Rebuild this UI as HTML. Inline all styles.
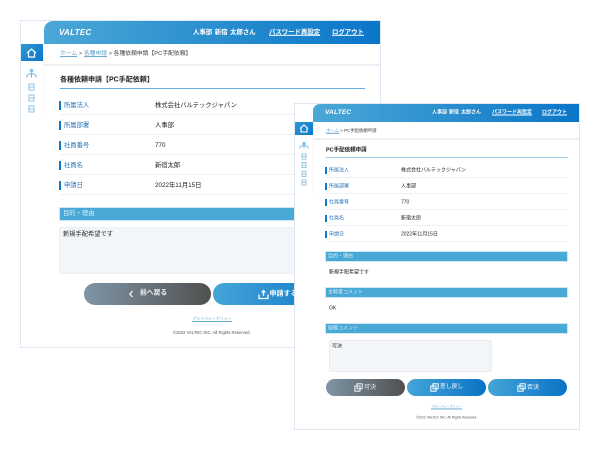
<!DOCTYPE html>
<html lang="ja"><head><meta charset="utf-8">
<style>
html,body{margin:0;padding:0;background:#fff}
body{width:600px;height:450px;position:relative;overflow:hidden;font-family:"Liberation Sans","Noto Sans CJK JP",sans-serif;color:#222}
.a{position:absolute;white-space:nowrap}
svg.a{filter:blur(.3px)}
.t{position:absolute;white-space:nowrap;line-height:1;transform:translateY(-50%);filter:blur(.35px)}
.win{position:absolute;background:#fff;border:1px solid #dfe9f5;box-sizing:border-box}
.hd{position:absolute;background:linear-gradient(90deg,#4ba8d6,#0a76c9)}
.home{position:absolute;background:linear-gradient(135deg,#2f97d2,#0a76c9)}
.bar{position:absolute;background:#48a8d6;border:1px solid #cfe6f3;box-sizing:border-box}
.ln{position:absolute;height:1px;background:#edf0f4}
.mk{position:absolute;background:#0e78c8}
.blue{color:#2a73b8}
.btn{position:absolute;border-radius:12px}
.g{background:linear-gradient(90deg,#7f95a6,#505050)}
.b{background:linear-gradient(90deg,#45a5d8,#0a72c6)}
.w{color:#fff}
.bt{color:#dcedf7}
.lg{font-style:italic;font-weight:bold;color:#fff;font-family:"Liberation Sans",sans-serif}
</style></head><body>

<!-- Left window -->
<div class="win" style="left:20px;top:20px;width:361px;height:328px"></div>
<div class="hd" style="left:44px;top:21px;width:336px;height:23px;border-top-left-radius:9px"></div>
<div class="t lg" style="left:59px;top:32.5px;font-size:8px;letter-spacing:.3px">VALTEC</div>
<div class="t w" style="left:193px;top:32.5px;font-size:6.4px;font-weight:bold;word-spacing:.8px">人事部 新宿 太郎さん</div>
<div class="t w" style="left:269px;top:32.5px;font-size:6.4px;font-weight:bold;text-decoration:underline">パスワード再設定</div>
<div class="t w" style="left:332px;top:32.5px;font-size:6.4px;font-weight:bold;text-decoration:underline">ログアウト</div>
<div class="home" style="left:21px;top:44px;width:23px;height:17px"></div>
<svg class="a" style="left:25px;top:47px" width="13" height="12" viewBox="0 0 13 12" fill="none" stroke="#fff" stroke-width="1.2"><path d="M2 6 6.500 2 11 6M3.500 5.500V10H9.500V5.500"/></svg>
<div class="a" style="left:43px;top:44px;width:1px;height:70px;background:#f3f5f7"></div>
<div class="a" style="left:44px;top:64px;width:336px;height:2px;background:#eeeff1"></div>
<svg class="a" style="left:25px;top:68px" width="13" height="46" viewBox="0 0 13 46" fill="none" stroke="#8cc3e6" stroke-width="1"><circle cx="6.500" cy="2.500" r="1.300" fill="#6fb3df"/><path d="M2 9.500V7.500L6.500 5 11 7.500V9.500M6.500 5V9.500" stroke="#6fb3df"/><rect x="4" y="16" width="5" height="6"/><path d="M4 19H9"/><rect x="4" y="27" width="5" height="6"/><path d="M4 30H9"/><rect x="4" y="38" width="5" height="6"/><path d="M4 41H9"/></svg>
<div class="t" style="left:60px;top:54.500px;font-size:5.800px;color:#66a3c9"><u>ホーム</u> <span style="color:#555">&gt;</span> <u>各種申請</u> <span style="color:#444">&gt; 各種依頼申請【PC手配依頼】</span></div>
<div class="t" style="left:60px;top:80px;font-size:7px;font-weight:bold">各種依頼申請【PC手配依頼】</div>
<div class="a" style="left:60px;top:87.500px;width:305px;height:1px;background:#5db0df"></div>

<div class="mk" style="left:59px;top:101px;width:2px;height:9px"></div><div class="t blue" style="left:64px;top:105.500px;font-size:6.300px">所属法人</div><div class="t" style="left:155px;top:105.500px;font-size:6.300px">株式会社バルテックジャパン</div><div class="ln" style="left:60px;top:114px;width:235px"></div>
<div class="mk" style="left:59px;top:121px;width:2px;height:9px"></div><div class="t blue" style="left:64px;top:125.500px;font-size:6.300px">所属部署</div><div class="t" style="left:155px;top:125.500px;font-size:6.300px">人事部</div><div class="ln" style="left:60px;top:134px;width:235px"></div>
<div class="mk" style="left:59px;top:141px;width:2px;height:9px"></div><div class="t blue" style="left:64px;top:145.500px;font-size:6.300px">社員番号</div><div class="t" style="left:155px;top:145.500px;font-size:6.300px">770</div><div class="ln" style="left:60px;top:154px;width:235px"></div>
<div class="mk" style="left:59px;top:161px;width:2px;height:9px"></div><div class="t blue" style="left:64px;top:165.500px;font-size:6.300px">社員名</div><div class="t" style="left:155px;top:165.500px;font-size:6.300px">新宿太郎</div><div class="ln" style="left:60px;top:174px;width:235px"></div>
<div class="mk" style="left:59px;top:181px;width:2px;height:9px"></div><div class="t blue" style="left:64px;top:185.500px;font-size:6.300px">申請日</div><div class="t" style="left:155px;top:185.500px;font-size:6.300px">2022年11月15日</div><div class="ln" style="left:60px;top:194px;width:235px"></div>

<div class="bar" style="left:59px;top:207px;width:240px;height:14px"></div>
<div class="t bt" style="left:63px;top:214px;font-size:6.300px">目的・理由</div>
<div class="a" style="left:59px;top:227px;width:240px;height:47px;background:#f3f6f9;border:1px solid #eceff3;box-sizing:border-box;border-radius:2px"></div>
<div class="t" style="left:63px;top:234.500px;font-size:6.250px">新規手配希望です</div>
<div class="btn g" style="left:84px;top:283px;width:127px;height:22px"></div>
<svg class="a" style="left:128px;top:290px" width="6" height="8" viewBox="0 0 6 8" fill="none" stroke="#fff" stroke-width="1.200"><path d="M4.500 1 1.800 4 4.500 7"/></svg>
<div class="t" style="left:140px;top:294px;font-size:6.800px;font-weight:bold;color:#eef2f4">前へ戻る</div>
<div class="btn b" style="left:213px;top:283px;width:140px;height:22px"></div>
<svg class="a" style="left:258px;top:288px" width="11" height="12" viewBox="0 0 11 12" fill="none" stroke="#fff" stroke-width="1.300"><path d="M1 6.500V10.500H10V6.500M5.500 8V2.500"/><path d="M2.800 4.500 5.500 1.500 8.200 4.500Z" fill="#fff" stroke="none"/></svg>
<div class="t w" style="left:269.500px;top:294px;font-size:7px;font-weight:bold">申請する</div>
<div class="t" style="left:192px;top:319px;font-size:4px;color:#69addb;text-decoration:underline">プライバシーポリシー</div>
<div class="t" style="left:173px;top:332.500px;font-size:4.200px;color:#555">©2022 VALTEC INC. All Rights Reserved.</div>

<!-- Right window -->
<div class="win" style="left:294px;top:103px;width:286px;height:327px;border-color:#dce7f3"></div>
<div class="hd" style="left:313px;top:104px;width:266px;height:18px;border-top-left-radius:7px"></div>
<div class="t lg" style="left:325px;top:113px;font-size:6.500px;letter-spacing:.2px">VALTEC</div>
<div class="t w" style="left:432px;top:113px;font-size:5px;font-weight:bold;word-spacing:.6px">人事部 新宿 太郎さん</div>
<div class="t w" style="left:492px;top:113px;font-size:5px;font-weight:bold;text-decoration:underline">パスワード再設定</div>
<div class="t w" style="left:542px;top:113px;font-size:5px;font-weight:bold;text-decoration:underline">ログアウト</div>
<div class="home" style="left:295px;top:122px;width:18px;height:13px"></div>
<svg class="a" style="left:297.500px;top:123px" width="12" height="11" viewBox="0 0 12 11" fill="none" stroke="#fff" stroke-width="1.100"><path d="M2 5.500 6 2 10 5.500M3 5V9H9V5"/></svg>
<div class="a" style="left:313px;top:122px;width:1px;height:71px;background:#f3f5f7"></div>
<div class="a" style="left:314px;top:138px;width:265px;height:1.500px;background:#eeeff1"></div>
<svg class="a" style="left:298px;top:141px" width="12" height="52" viewBox="0 0 12 52" fill="none" stroke="#8cc3e6" stroke-width=".9"><circle cx="6" cy="2.500" r="1.300" fill="#6fb3df"/><path d="M2 7.500V6L6 4 10 6V7.500M6 4.500V7.500" stroke="#6fb3df"/><rect x="4" y="13" width="4" height="5"/><path d="M4 15.500H8"/><rect x="4" y="21.500" width="4" height="5"/><path d="M4 24H8"/><rect x="4" y="30.500" width="4" height="5"/><path d="M4 33H8"/><rect x="4" y="39" width="4" height="5"/><path d="M4 41.500H8"/></svg>
<div class="t" style="left:326px;top:130.500px;font-size:4.400px;color:#66a3c9"><u>ホーム</u> <span style="color:#444">&gt; PC手配依頼申請</span></div>
<div class="t" style="left:326px;top:150.500px;font-size:5.500px;font-weight:bold">PC手配依頼申請</div>
<div class="a" style="left:326px;top:156.500px;width:242px;height:1px;background:#9dcde9"></div>

<div class="mk" style="left:325px;top:167px;width:2px;height:7px"></div><div class="t blue" style="left:329px;top:171px;font-size:5px">所属法人</div><div class="t" style="left:401px;top:171px;font-size:5px">株式会社バルテックジャパン</div><div class="ln" style="left:326px;top:177px;width:242px"></div>
<div class="mk" style="left:325px;top:183px;width:2px;height:7px"></div><div class="t blue" style="left:329px;top:187px;font-size:5px">所属部署</div><div class="t" style="left:401px;top:187px;font-size:5px">人事部</div><div class="ln" style="left:326px;top:193px;width:242px"></div>
<div class="mk" style="left:325px;top:199px;width:2px;height:7px"></div><div class="t blue" style="left:329px;top:203px;font-size:5px">社員番号</div><div class="t" style="left:401px;top:203px;font-size:5px">770</div><div class="ln" style="left:326px;top:209px;width:242px"></div>
<div class="mk" style="left:325px;top:215px;width:2px;height:7px"></div><div class="t blue" style="left:329px;top:218.500px;font-size:5px">社員名</div><div class="t" style="left:401px;top:218.500px;font-size:5px">新宿太郎</div><div class="ln" style="left:326px;top:225px;width:242px"></div>
<div class="mk" style="left:325px;top:231px;width:2px;height:7px"></div><div class="t blue" style="left:329px;top:234.500px;font-size:5px">申請日</div><div class="t" style="left:401px;top:234.500px;font-size:5px">2022年11月15日</div><div class="ln" style="left:326px;top:241px;width:242px"></div>

<div class="bar" style="left:325px;top:251px;width:243px;height:11px"></div>
<div class="t bt" style="left:328px;top:256.500px;font-size:5px">目的・理由</div>
<div class="t" style="left:329px;top:272.500px;font-size:5px">新規手配希望です</div>
<div class="bar" style="left:325px;top:287px;width:243px;height:11px"></div>
<div class="t bt" style="left:328px;top:292.500px;font-size:5px">主幹者コメント</div>
<div class="t" style="left:329px;top:308.500px;font-size:5px">OK</div>
<div class="bar" style="left:325px;top:323px;width:243px;height:11px"></div>
<div class="t bt" style="left:328px;top:328.500px;font-size:5px">総務コメント</div>
<div class="a" style="left:329px;top:340px;width:163px;height:32px;background:#f3f6f9;border:1px solid #e9edf2;box-sizing:border-box;border-radius:2px"></div>
<div class="t" style="left:332px;top:346.500px;font-size:5px">可決</div>

<div class="btn g" style="left:326px;top:379px;width:79px;height:17px;border-radius:9px"></div>
<div class="btn b" style="left:407px;top:379px;width:79px;height:17px;border-radius:9px"></div>
<div class="btn b" style="left:488px;top:379px;width:79px;height:17px;border-radius:9px"></div>
<svg class="a" style="left:354px;top:383px" width="9" height="9" viewBox="0 0 9 9" fill="none" stroke="#eef4f8" stroke-width="1"><rect x="3" y=".8" width="5.200" height="5"/><rect x=".8" y="3" width="5.200" height="5.200"/></svg>
<div class="t" style="left:364px;top:387.500px;font-size:6px;color:#e8eef2">可決</div>
<svg class="a" style="left:430px;top:383px" width="9" height="9" viewBox="0 0 9 9" fill="none" stroke="#fff" stroke-width="1"><rect x="3" y=".8" width="5.200" height="5"/><rect x=".8" y="3" width="5.200" height="5.200"/></svg>
<div class="t w" style="left:440px;top:387.500px;font-size:5.800px">差し戻し</div>
<svg class="a" style="left:517px;top:383px" width="9" height="9" viewBox="0 0 9 9" fill="none" stroke="#fff" stroke-width="1"><rect x="3" y=".8" width="5.200" height="5"/><rect x=".8" y="3" width="5.200" height="5.200"/></svg>
<div class="t w" style="left:527px;top:387.500px;font-size:6px">否決</div>
<div class="t" style="left:431px;top:407px;font-size:3.100px;color:#69addb;text-decoration:underline">プライバシーポリシー</div>
<div class="t" style="left:416px;top:418px;font-size:3.300px;color:#555">©2022 VALTEC INC. All Rights Reserved.</div>
</body></html>
